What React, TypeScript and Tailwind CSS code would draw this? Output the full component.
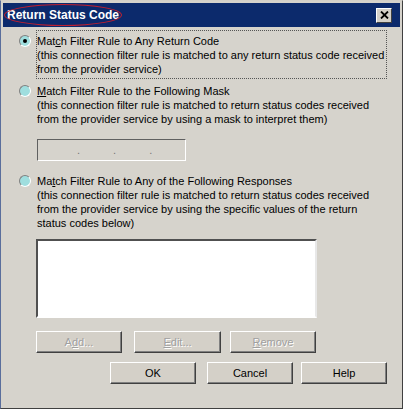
import React from "react";

const font = { fontFamily: '"Liberation Sans", Arial, sans-serif' };

function Radio({ checked }: { checked?: boolean }) {
  return (
    <span className="mt-[1px] flex h-[12px] w-[12px] shrink-0 items-center justify-center rounded-full border border-t-[#808080] border-l-[#808080] border-b-white border-r-white bg-[#9fdede]">
      {checked && <span className="h-[4px] w-[4px] rounded-full bg-black" />}
    </span>
  );
}

function Btn({ label, ul, disabled, w = "w-[86px]" }: { label: string; ul?: number; disabled?: boolean; w?: string }) {
  const text =
    ul === undefined ? (
      label
    ) : (
      <>
        {label.slice(0, ul)}
        <span className="underline">{label[ul]}</span>
        {label.slice(ul + 1)}
      </>
    );
  return (
    <button
      className={`flex h-[22px] ${w} items-center justify-center border border-t-white border-l-white border-r-[#404040] border-b-[#404040] bg-[#d4d0c8] text-[11px] shadow-[inset_-1px_-1px_0_#808080] ${
        disabled ? "text-[#a0a0a0] [text-shadow:1px_1px_0_#fff]" : "text-black"
      }`}
    >
      {text}
    </button>
  );
}

function Option({
  checked,
  title,
  lines,
  focus,
}: {
  checked?: boolean;
  title: React.ReactNode;
  lines: string[];
  focus?: boolean;
}) {
  return (
    <div className="flex gap-[5px] pl-[16px]">
      <Radio checked={checked} />
      <div
        className={`-mt-[4px] pt-[3px] pb-[2px] leading-[14px] ${
          focus ? "w-[351px] border border-dotted border-[#555]" : "border border-transparent"
        }`}
      >
        <div>{title}</div>
        {lines.map((l) => (
          <div key={l}>{l}</div>
        ))}
      </div>
    </div>
  );
}

export default function App() {
  return (
    <div className="h-[415px] w-[404px] bg-white text-[11px] text-black" style={font}>
      <div className="flex h-[409px] w-[403px] flex-col border border-t-[#d4d0c8] border-l-[#5a6e9c] border-r-[#404040] border-b-[#404040] bg-[#d6d3cc] p-[2px]">
        <div className="relative flex h-[24px] shrink-0 items-center bg-[#0c2a6c] pl-[4px] pr-[8px]">
          <span className="absolute left-[1px] top-[1px] h-[22px] w-[118px] rounded-[50%] border border-[#c02030]" />
          <span className="text-[12px] font-bold text-white">Return Status Code</span>
          <span className="ml-auto flex h-[15px] w-[16px] items-center justify-center border border-t-white border-l-white border-r-[#404040] border-b-[#404040] bg-[#d4d0c8]">
            <svg width="9" height="8" viewBox="0 0 9 8">
              <path d="M1 0.5 L8 7.5 M8 0.5 L1 7.5" stroke="#000" strokeWidth="1.8" />
            </svg>
          </span>
        </div>

        <div className="flex flex-1 flex-col pt-[7px]">
          <Option
            focus
            checked
            title={
              <>
                Mat<span className="underline">c</span>h Filter Rule to Any Return Code
              </>
            }
            lines={[
              "(this connection filter rule is matched to any return status code received",
              "from the provider service)",
            ]}
          />
          <div className="mt-[5px]">
            <Option
              title={
                <>
                  <span className="underline">M</span>atch Filter Rule to the Following Mask
                </>
              }
              lines={[
                "(this connection filter rule is matched to return status codes received",
                "from the provider service by using a mask to interpret them)",
              ]}
            />
          </div>
          <div className="ml-[34px] mt-[10px] flex h-[22px] w-[149px] items-center gap-[33px] border border-t-[#606060] border-l-[#606060] border-b-white border-r-white bg-[#d6d3cc] pl-[39px] text-[#777]">
            <span>.</span>
            <span>.</span>
            <span>.</span>
          </div>
          <div className="mt-[13px]">
            <Option
              title={
                <>
                  Ma<span className="underline">t</span>ch Filter Rule to Any of the Following Responses
                </>
              }
              lines={[
                "(this connection filter rule is matched to return status codes received",
                "from the provider service by using the specific values of the return",
                "status codes below)",
              ]}
            />
          </div>
          <div className="ml-[33px] mt-[6px] h-[79px] w-[281px] border-2 border-t-[#505050] border-l-[#505050] border-b-white border-r-[#e8e8e8] bg-white" />
          <div className="ml-[33px] mt-[13px] flex">
            <Btn label="Add..." ul={1} disabled />
            <div className="ml-[12px]">
              <Btn label="Edit..." ul={0} disabled w="w-[87px]" />
            </div>
            <div className="ml-[9px]">
              <Btn label="Remove" ul={0} disabled />
            </div>
          </div>
          <div className="ml-[107px] mt-[9px] flex">
            <Btn label="OK" />
            <div className="ml-[11px]">
              <Btn label="Cancel" />
            </div>
            <div className="ml-[8px]">
              <Btn label="Help" />
            </div>
          </div>
        </div>
      </div>
    </div>
  );
}
